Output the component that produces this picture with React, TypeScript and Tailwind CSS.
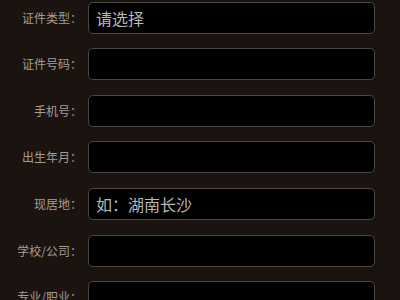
import React from "react";

const rows: { label: string; placeholder?: string }[] = [
  { label: "证件类型：", placeholder: "请选择" },
  { label: "证件号码：" },
  { label: "手机号：" },
  { label: "出生年月：" },
  { label: "现居地：", placeholder: "如：湖南长沙" },
  { label: "学校/公司：" },
  { label: "专业/职业：" },
];

export default function App() {
  return (
    <div
      className="w-[400px] h-[300px] overflow-hidden bg-[#1b1310] pt-[1.5px]"
      style={{ fontFamily: '"Noto Sans CJK SC", "Noto Sans", sans-serif' }}
    >
      <div className="flex flex-col gap-[14.67px]">
        {rows.map((r) => (
          <div key={r.label} className="flex items-center">
            <div className="w-[82px] text-right text-[12px] leading-none text-[#a59d95] whitespace-nowrap">
              {r.label}
            </div>
            <div className="ml-[6px] w-[287px] h-[32px] shrink-0 rounded-[5px] border border-[#4d4742] bg-black flex items-center px-[7px]">
              {r.placeholder && (
                <span className="text-[16px] leading-none text-[#b9b9b9] whitespace-nowrap">
                  {r.placeholder}
                </span>
              )}
            </div>
          </div>
        ))}
      </div>
    </div>
  );
}
